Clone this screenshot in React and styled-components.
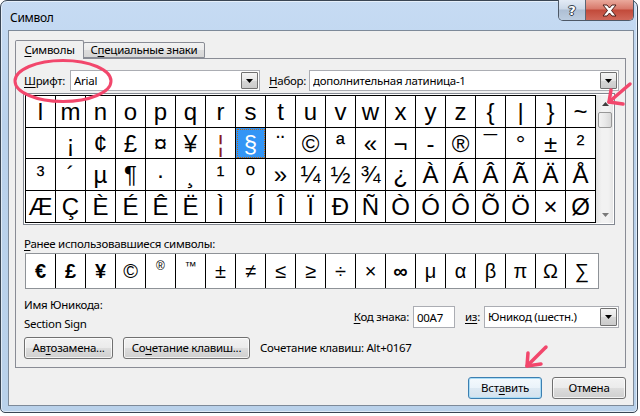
import React from 'react';
import styled, { createGlobalStyle } from 'styled-components';

const Global = createGlobalStyle`
  html, body { margin: 0; padding: 0; background: #ffffff; }
  body {
    font-family: "Noto Sans", "Open Sans", sans-serif;
    font-size: 11.5px;
    letter-spacing: -0.28px;
    color: #000;
  }
  * { box-sizing: border-box; }
`;

const Window = styled.div`
  position: relative;
  width: 638px;
  height: 413px;
  border: 1px solid #3a4654;
  border-radius: 7px 7px 5px 5px;
  background: linear-gradient(180deg, #c6dbf3 0%, #bad2ec 30%, #b9d1ea 100%);
  box-shadow: inset 0 0 0 1px rgba(255, 255, 255, 0.55);
  display: flex;
  flex-direction: column;
  padding: 0 3px 6px 7px;
`;

const TitleBar = styled.div`
  height: 29px;
  display: flex;
  align-items: flex-start;
`;

const Title = styled.div`
  margin: 9px 0 0 2px;
  font-size: 12px;
  line-height: 16px;
`;

const CaptionButtons = styled.div`
  margin-left: auto;
  margin-top: -1px;
  display: flex;
  height: 21px;
  border: 1px solid #4d5866;
  border-top: none;
  border-radius: 0 0 5px 5px;
  overflow: hidden;
`;

const HelpButton = styled.div`
  width: 27px;
  display: flex;
  align-items: center;
  justify-content: center;
  background: linear-gradient(180deg, #e3ebf5 0%, #cbd8e8 45%, #aebfd4 50%, #bccde0 100%);
  border-right: 1px solid #5b6675;
  color: #fff;
  font-family: "DejaVu Sans", sans-serif;
  font-weight: bold;
  font-size: 13px;
  text-shadow: 0 0 1px #27323f, 1px 0 0 #3a4654, -1px 0 0 #3a4654, 0 1px 0 #3a4654, 0 -1px 0 #3a4654;
`;

const CloseButton = styled.div`
  width: 47px;
  display: flex;
  align-items: center;
  justify-content: center;
  background: linear-gradient(180deg, #eaa99c 0%, #d7786a 45%, #c24a3a 50%, #d0685a 100%);
`;

const Client = styled.div`
  flex: 1;
  background: #f0f0f0;
  border: 1px solid #7d8a99;
  padding: 9px 7px 6px 6px;
  display: flex;
  flex-direction: column;
`;

const Tabs = styled.div`
  display: flex;
  align-items: flex-start;
  height: 19px;
  margin-bottom: -1px;
  position: relative;
  z-index: 1;
`;

const Tab = styled.div`
  height: ${p => (p.$active ? 19 : 16)}px;
  margin-top: ${p => (p.$active ? 0 : 2)}px;
  margin-left: ${p => (p.$active ? 0 : -1)}px;
  width: ${p => p.$w}px;
  border: 1px solid #898c95;
  border-bottom: ${p => (p.$active ? 'none' : '1px solid #898c95')};
  border-radius: 2px 2px 0 0;
  background: ${p => (p.$active ? '#f0f0f0' : 'linear-gradient(180deg, #f2f2f2 0%, #ebebeb 50%, #dddddd 51%, #d6d6d6 100%)')};
  position: relative;
  z-index: ${p => (p.$active ? 2 : 1)};
  display: flex;
  align-items: center;
  justify-content: center;
  line-height: 14px;
  padding-bottom: ${p => (p.$active ? 1 : 0)}px;
`;

const Panel = styled.div`
  border: 1px solid #898c95;
  background: #f0f0f0;
  padding: 11px 6px 8px 7px;
  display: flex;
  flex-direction: column;
`;

const FieldRow = styled.div`
  display: flex;
  align-items: center;
  height: 21px;
`;

const Label = styled.div`
  width: ${p => (p.$w ? `${p.$w}px` : 'auto')};
  margin-left: ${p => p.$ml || 0}px;
  margin-right: ${p => p.$mr || 0}px;
  line-height: 16px;
  white-space: nowrap;
`;

const Key = styled.span`
  text-decoration: underline;
  text-underline-offset: 2px;
`;

const Combo = styled.div`
  width: ${p => (p.$w ? `${p.$w}px` : 'auto')};
  flex: ${p => (p.$w ? 'none' : 1)};
  height: ${p => p.$h || 21}px;
  border: 1px solid #abadb3;
  background: #fff;
  display: flex;
  align-items: center;
  padding-left: 3px;
`;

const ComboText = styled.div`
  flex: 1;
  white-space: nowrap;
  overflow: hidden;
  line-height: 16px;
`;

const DropButton = styled.div`
  width: 17px;
  height: ${p => p.$h || 17}px;
  margin-right: 1px;
  border: 1px solid #707070;
  border-radius: 1px;
  background: linear-gradient(180deg, #f4f4f4 0%, #e6e6e6 50%, #d6d6d6 51%, #cbcbcb 100%);
  display: flex;
  align-items: center;
  justify-content: center;
`;

const GridFrame = styled.div`
  margin-top: 2px;
  align-self: flex-start;
  display: flex;
  border: 1px solid #828790;
  padding: 1px;
  background: #fff;
`;

const SymbolGrid = styled.div`
  display: grid;
  grid-template-columns: repeat(19, 30px);
  grid-template-rows: 32px 31px 32px 32px;
  border-left: 1px solid #000;
  border-top: 1px solid #000;
  font-family: "Liberation Sans", Arial, sans-serif;
  font-size: 24px;
  letter-spacing: 0;
`;

const Cell = styled.div`
  border-right: 1px solid #000;
  border-bottom: 1px solid #000;
  text-align: center;
  line-height: 31px;
  overflow: hidden;
  white-space: pre;
  color: ${p => (p.$sel ? '#fff' : p.$tint || '#000')};
  background: ${p => (p.$sel ? '#3395f5' : '#fff')};
  outline: ${p => (p.$sel ? '1px dotted #b8681c' : 'none')};
  outline-offset: -2px;
`;

const Scrollbar = styled.div`
  width: 17px;
  display: flex;
  flex-direction: column;
  background: linear-gradient(90deg, #e6e6e6 0%, #f2f2f2 30%, #f2f2f2 70%, #e6e6e6 100%);
  border-left: 1px solid #e3e3e3;
`;

const ScrollArrow = styled.div`
  height: 17px;
  display: flex;
  align-items: center;
  justify-content: center;
`;

const Thumb = styled.div`
  height: 16px;
  margin: 0 1px 0 1px;
  border: 1px solid #979797;
  border-radius: 2px;
  background: linear-gradient(90deg, #f3f3f3 0%, #e9e9e9 50%, #d8d8d8 100%);
`;

const ScrollSpace = styled.div`
  flex: 1;
`;

const RecentLabel = styled(Label)`
  margin-top: 11px;
`;

const RecentGrid = styled.div`
  margin: 1px 0 0 2px;
  width: 574px;
  height: 36px;
  display: grid;
  grid-template-columns: repeat(18, 30px) 1fr;
  border: 1px solid #8e9297;
  background: #fff;
  font-family: "Liberation Sans", Arial, "DejaVu Sans", sans-serif;
  font-size: 20px;
  letter-spacing: 0;
`;

const RecentCell = styled.div`
  border-right: ${p => (p.$last ? 'none' : '1px solid #000')};
  display: flex;
  align-items: ${p => (p.$sup ? 'flex-start' : 'center')};
  justify-content: center;
  padding-top: ${p => (p.$sup ? 6 : 0)}px;
  font-size: ${p => (p.$sup ? 12 : 20)}px;
  font-weight: ${p => (p.$bold ? 'bold' : 'normal')};
  line-height: 1;
`;

const InfoSection = styled.div`
  margin-top: 8px;
  display: flex;
  justify-content: space-between;
  align-items: flex-start;
`;

const InfoLeft = styled.div`
  margin-left: 1px;
  display: flex;
  flex-direction: column;
  gap: 3px;
`;

const InfoRight = styled.div`
  margin-top: 9px;
  display: flex;
  align-items: center;
  height: 22px;
`;

const CodeInput = styled.div`
  width: 42px;
  height: 22px;
  border: 1px solid #abadb3;
  background: #fff;
  padding-left: 3px;
  display: flex;
  align-items: center;
  margin-right: 10px;
`;

const ButtonRow = styled.div`
  margin-top: 5px;
  display: flex;
  align-items: center;
  padding-left: 1px;
`;

const Button = styled.div`
  width: ${p => p.$w}px;
  height: 22px;
  margin-right: ${p => p.$mr || 0}px;
  border: 1px solid ${p => (p.$default ? '#3c7fb1' : '#707070')};
  border-radius: 3px;
  background: ${p =>
    p.$default
      ? 'linear-gradient(180deg, #f4f9fd 0%, #eaf3fa 50%, #dde9f3 51%, #d3e2ee 100%)'
      : 'linear-gradient(180deg, #f2f2f2 0%, #ebebeb 50%, #dddddd 51%, #cfcfcf 100%)'};
  box-shadow: inset 0 0 0 1px ${p => (p.$default ? '#a9dcf6' : 'rgba(255,255,255,0.75)')};
  display: flex;
  align-items: center;
  justify-content: center;
  line-height: 14px;
  white-space: nowrap;
`;

const BottomRow = styled.div`
  margin-top: 9px;
  display: flex;
  justify-content: flex-end;
  gap: 10px;
`;

const Overlay = styled.svg`
  position: absolute;
  left: -1px;
  top: -1px;
  width: 640px;
  height: 416px;
  pointer-events: none;
  z-index: 5;
`;

const row1 = ['l', 'm', 'n', 'o', 'p', 'q', 'r', 's', 't', 'u', 'v', 'w', 'x', 'y', 'z', '{', '|', '}', '~'];
const row2 = ['\u00A0', '¡', '¢', '£', '¤', '¥', '¦', '§', '¨', '©', 'ª', '«', '¬', '-', '®', '¯', '°', '±', '²'];
const row3 = ['³', '´', 'µ', '¶', '·', '¸', '¹', 'º', '»', '¼', '½', '¾', '¿', 'À', 'Á', 'Â', 'Ã', 'Ä', 'Å'];
const row4 = ['Æ', 'Ç', 'È', 'É', 'Ê', 'Ë', 'Ì', 'Í', 'Î', 'Ï', 'Ð', 'Ñ', 'Ò', 'Ó', 'Ô', 'Õ', 'Ö', '×', 'Ø'];

const recent = [
  { c: '€', bold: true },
  { c: '£', bold: true },
  { c: '¥', bold: true },
  { c: '©' },
  { c: '®', sup: true },
  { c: '™', sup: true },
  { c: '±' },
  { c: '≠' },
  { c: '≤' },
  { c: '≥' },
  { c: '÷' },
  { c: '×' },
  { c: '∞', bold: true },
  { c: 'μ' },
  { c: 'α' },
  { c: 'β' },
  { c: 'π' },
  { c: 'Ω' },
  { c: '∑' },
];

const Down = () => (
  <svg width="7" height="4" viewBox="0 0 7 4">
    <path d="M0 0 H7 L3.5 4 Z" fill="#000" />
  </svg>
);

const SmallArrow = ({ up }) => (
  <svg width="7" height="4" viewBox="0 0 7 4">
    <path d={up ? 'M0 4 H7 L3.5 0 Z' : 'M0 0 H7 L3.5 4 Z'} fill={up ? '#404040' : '#7a7a7a'} />
  </svg>
);

export default function App() {
  const rows = [row1, row2, row3, row4];
  return (
    <>
      <Global />
      <Window>
        <TitleBar>
          <Title>Символ</Title>
          <CaptionButtons>
            <HelpButton>?</HelpButton>
            <CloseButton>
              <svg width="15" height="13" viewBox="0 0 15 13">
                <path
                  d="M1 1 H5 L7.5 4 L10 1 H14 L9.5 6.5 L14 12 H10 L7.5 9 L5 12 H1 L5.5 6.5 Z"
                  fill="#fff"
                  stroke="#4a1f1a"
                  strokeWidth="1"
                  strokeLinejoin="round"
                />
              </svg>
            </CloseButton>
          </CaptionButtons>
        </TitleBar>

        <Client>
          <Tabs>
            <Tab $active $w={69}>
              <span><Key>С</Key>имволы</span>
            </Tab>
            <Tab $w={122}>
              <span>С<Key>п</Key>ециальные знаки</span>
            </Tab>
          </Tabs>

          <Panel>
            <FieldRow>
              <Label $w={46} $ml={1}>
                <Key>Ш</Key>рифт:
              </Label>
              <Combo $w={190}>
                <ComboText>Arial</ComboText>
                <DropButton><Down /></DropButton>
              </Combo>
              <Label $w={40} $ml={9}>
                <Key>Н</Key>абор:
              </Label>
              <Combo>
                <ComboText>дополнительная латиница-1</ComboText>
                <DropButton><Down /></DropButton>
              </Combo>
            </FieldRow>

            <GridFrame>
              <SymbolGrid>
                {rows.map((r, ri) =>
                  r.map((c, ci) => (
                    <Cell
                      key={`${ri}-${ci}`}
                      $sel={ri === 1 && ci === 7}
                      $tint={c === '¦' ? '#8a1c1c' : undefined}
                    >
                      {c}
                    </Cell>
                  ))
                )}
              </SymbolGrid>
              <Scrollbar>
                <ScrollArrow><SmallArrow up /></ScrollArrow>
                <Thumb />
                <ScrollSpace />
                <ScrollArrow><SmallArrow /></ScrollArrow>
              </Scrollbar>
            </GridFrame>

            <RecentLabel $ml={1}>
              <Key>Р</Key>анее использовавшиеся символы:
            </RecentLabel>
            <RecentGrid>
              {recent.map((r, i) => (
                <RecentCell key={i} $bold={r.bold} $sup={r.sup} $last={i === recent.length - 1}>
                  {r.c}
                </RecentCell>
              ))}
            </RecentGrid>

            <InfoSection>
              <InfoLeft>
                <Label>Имя Юникода:</Label>
                <Label>Section Sign</Label>
              </InfoLeft>
              <InfoRight>
                <Label $mr={4}>
                  <Key>К</Key>од знака:
                </Label>
                <CodeInput>00A7</CodeInput>
                <Label $mr={4}>
                  <Key>из</Key>:
                </Label>
                <Combo $w={135} $h={22}>
                  <ComboText>Юникод (шестн.)</ComboText>
                  <DropButton $h={18}><Down /></DropButton>
                </Combo>
              </InfoRight>
            </InfoSection>

            <ButtonRow>
              <Button $w={89} $mr={10}>
                <span>Ав<Key>т</Key>озамена...</span>
              </Button>
              <Button $w={127} $mr={10}>
                <span>Со<Key>ч</Key>етание клавиш...</span>
              </Button>
              <Label>Сочетание клавиш: Alt+0167</Label>
            </ButtonRow>
          </Panel>

          <BottomRow>
            <Button $w={74} $default>
              <span>Вст<Key>а</Key>вить</span>
            </Button>
            <Button $w={74}>Отмена</Button>
          </BottomRow>
        </Client>

        <Overlay viewBox="0 0 640 416">
          <ellipse cx="63" cy="81" rx="48" ry="20.5" fill="none" stroke="#f2476c" strokeWidth="3" />
          <g stroke="#f2476c" strokeWidth="3.5" strokeLinecap="round" strokeLinejoin="round" fill="none">
            <path d="M630 84 L609 102" />
            <path d="M611 90 L609 102 L623 104" />
            <path d="M546 347 L527 366" />
            <path d="M528 353 L527 366 L541 364" />
          </g>
        </Overlay>
      </Window>
    </>
  );
}
